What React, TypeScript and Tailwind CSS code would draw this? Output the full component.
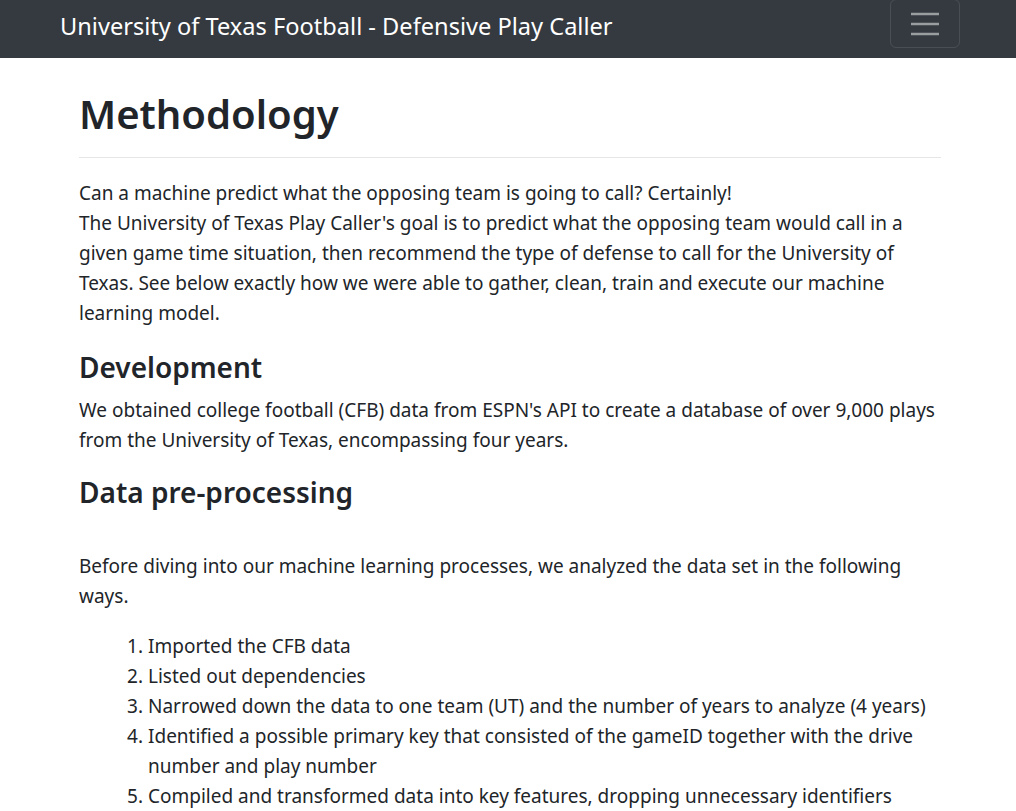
const steps = [
  "Imported the CFB data",
  "Listed out dependencies",
  "Narrowed down the data to one team (UT) and the number of years to analyze (4 years)",
  "Identified a possible primary key that consisted of the gameID together with the drive number and play number",
  "Compiled and transformed data into key features, dropping unnecessary identifiers",
];

export default function App() {
  return (
    <div className="min-h-screen bg-white text-[#212529] font-['Noto_Sans',sans-serif]">
      {/* Navbar */}
      <nav className="h-[58px] bg-[#343a40] flex items-start justify-between pl-[60px] pr-[56px]">
        <span className="mt-[11px] text-[23.6px] leading-[30px] text-white">
          University of Texas Football - Defensive Play Caller
        </span>
        <button
          type="button"
          className="h-[49px] w-[70px] -mt-px border border-white/10 rounded-md flex items-center justify-center"
        >
          <svg width="30" height="30" viewBox="0 0 30 30">
            <path
              d="M1 5h28M1 15h28M1 25h28"
              stroke="rgba(255,255,255,0.5)"
              strokeWidth="2.5"
            />
          </svg>
        </button>
      </nav>

      <main className="w-[862px] ml-[79px] text-[19px] leading-[30px]">
        <h1 className="mt-[32px] text-[40px] leading-[48px] font-semibold">Methodology</h1>
        <hr className="mt-[19px] border-[#e6e6e6]" />

        <p className="mt-[20px]">
          Can a machine predict what the opposing team is going to call? Certainly!
          <br />
          The University of Texas Play Caller's goal is to predict what the opposing team would call in a
          given game time situation, then recommend the type of defense to call for the University of
          Texas. See below exactly how we were able to gather, clean, train and execute our machine
          learning model.
        </p>

        <h3 className="mt-[22px] text-[28px] leading-[34px] font-semibold">Development</h3>
        <p className="mt-[11px]">
          We obtained college football (CFB) data from ESPN's API to create a database of over 9,000
          plays from the University of Texas, encompassing four years.
        </p>

        <h3 className="mt-[20px] text-[28px] leading-[34px] font-semibold">Data pre-processing</h3>
        <p className="mt-[42px]">
          Before diving into our machine learning processes, we analyzed the data set in the following
          ways.
        </p>

        <ol className="mt-[20px] pl-[69px] list-decimal">
          {steps.map((s) => (
            <li key={s}>{s}</li>
          ))}
        </ol>
      </main>
    </div>
  );
}
